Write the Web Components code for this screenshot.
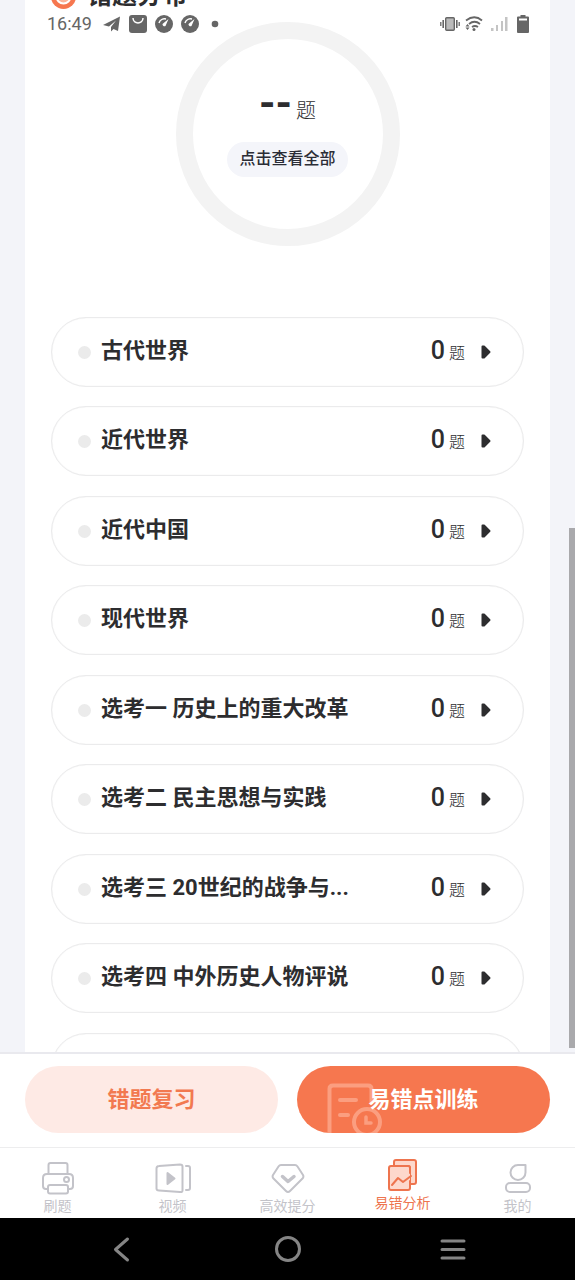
<!DOCTYPE html>
<html lang="zh-CN">
<head>
<meta charset="utf-8">
<meta name="viewport" content="width=device-width, initial-scale=1">
<title>错题分布</title>
<style>
  html, body { margin: 0; height: 100%; }
  body {
    font-family: Roboto, "Noto Sans CJK SC", sans-serif;
    color: #2d2d2f;
    --accent: #f6774f;
    --line: #ebebec;
    --muted: #c3c3c9;
  }
</style>
</head>
<body>
<mistake-app></mistake-app>

<script>
const define = (name, html, setup) => {
  const template = document.createElement('template');
  template.innerHTML = html;
  customElements.define(name, class extends HTMLElement {
    constructor() {
      super();
      this.attachShadow({ mode: 'open' }).append(template.content.cloneNode(true));
    }
    connectedCallback() { if (setup) setup(this, this.shadowRoot); }
  });
};

/* Phone status bar, laid over the scrolled page */
define('status-bar', `
<style>
  :host { display: flex; align-items: center; justify-content: space-between; height: 24px; padding: 0 46px 0 47px; color: #666; }
  div { display: flex; align-items: center; gap: 8px; }
  time { font-size: 18px; line-height: 24px; margin-right: 3px; }
  svg { display: block; }
  .net { gap: 5px; }
  .net svg + svg + svg { margin-left: 3px; }
</style>
<div>
  <time>16:49</time>
  <svg width="18" height="18" viewBox="0 0 18 18" fill="#666"><path d="M0 10 17 1.500 15 16 10.500 14 8 16.500V12L13 5.500 6 11.500Z"/></svg>
  <svg width="18" height="18" viewBox="0 0 18 18"><rect width="18" height="18" rx="3" fill="#666"/><path d="M4 3c0 6.500 10 6.500 10 0" fill="none" stroke="#fff" stroke-width="1.500"/></svg>
  <svg width="18" height="18" viewBox="0 0 18 18"><circle cx="9" cy="9" r="9" fill="#666"/><path d="M4 8a6 6 0 0 1 7-4" fill="none" stroke="#fff" stroke-width="1.500"/><path d="M13.500 4 10.500 11A2 2 0 0 1 7.500 9Z" fill="#fff"/></svg>
  <svg width="18" height="18" viewBox="0 0 18 18"><circle cx="9" cy="9" r="9" fill="#666"/><path d="M4 8a6 6 0 0 1 7-4" fill="none" stroke="#fff" stroke-width="1.500"/><path d="M13.500 4 10.500 11A2 2 0 0 1 7.500 9Z" fill="#fff"/></svg>
  <svg width="18" height="18" viewBox="0 0 18 18"><circle cx="8" cy="9" r="3.300" fill="#666"/></svg>
</div>
<div class="net">
  <svg width="20" height="16" viewBox="0 0 20 16" fill="none" stroke="#666"><rect x="5.700" y="1.700" width="8.600" height="12.600" rx="1" fill="#bbb" stroke-width="1.400"/><path d="M3.200 4v8M16.800 4v8" stroke-width="1.600"/><path d="M.8 6v4M19.200 6v4" stroke-width="1.300"/></svg>
  <svg width="18" height="18" viewBox="0 0 18 18" fill="none" stroke="#666" stroke-width="1.800"><path d="M1 5.500q8.500-6.500 16 0M4 9q5.500-4.500 11 0M7 12q3-2 6 0"/><circle cx="9" cy="14.500" r="1.500" fill="#666" stroke="none"/><path d="M.5 11.500 2.500 9l2 2.500ZM.5 12.500l2 2.500 2-2.500Z" fill="#666" stroke="none"/></svg>
  <svg width="18" height="18" viewBox="0 0 18 18" fill="#c4c4c4"><path d="M0 13h2.500v3H0zM5 10h2v6H5zM10 6h2v10h-2zM14 2h2.500v14H14z"/></svg>
  <svg width="12" height="18" viewBox="0 0 12 18"><path d="M3.500 0h5v1.500H11q1 0 1 1V17q0 1-1 1H1q-1 0-1-1V2.500q0-1 1-1h2.500z" fill="#666"/><path d="M2 3.500h8v2H2z" fill="#fff"/></svg>
</div>`);

/* Ring with the total and a shortcut to the full list */
define('total-ring', `
<style>
  :host { display: flex; flex-direction: column; align-items: center; box-sizing: border-box; width: 224px; height: 224px; padding-top: 39px; border: 17px solid #f3f3f3; border-radius: 50%; }
  p { display: flex; align-items: baseline; gap: 4px; margin: 0; line-height: 52px; font-size: 20px; font-weight: 300; }
  b { font-size: 42px; font-weight: 700; }
  button { margin-top: 5px; padding: 0 12px 2px; height: 35px; border: 0; border-radius: 18px; background: #f4f5fa; font: 500 16px/32px Roboto, "Noto Sans CJK SC", sans-serif; color: #2b2d36; }
</style>
<p><b><slot name="count"></slot></b><slot></slot></p>
<button type="button"><slot name="action"></slot></button>`);

define('topic-row', `
<style>
  :host { display: block; }
  a { display: flex; align-items: center; box-sizing: border-box; height: 70px; padding: 0 32px 0 26px; border: 1px solid var(--line); border-radius: 35px; box-shadow: inset 0 0 1px #e2e2e2; color: inherit; text-decoration: none; }
  i { width: 13px; height: 13px; margin-right: 10px; border-radius: 50%; background: #ebebeb; }
  h3 { flex: 1; margin: 0; padding-bottom: 2px; font-size: 22px; line-height: 32px; font-weight: 700; }
  span { display: flex; align-items: baseline; gap: 4px; font-size: 16px; line-height: 32px; font-weight: 300; }
  b { font-size: 25px; font-weight: 500; }
  svg { margin-left: 16px; }
</style>
<a href="#"><i></i><h3><slot></slot></h3><span><b></b></span>
<svg width="10" height="14" viewBox="0 0 10 14"><path d="M1.500 1.500H3L8.500 7 3 12.500H1.500Z" fill="#2d2d2f" stroke="#2d2d2f" stroke-width="2" stroke-linejoin="round"/></svg></a>`,
(el, root) => {
  if (!el.hasAttribute('count')) return;
  root.querySelector('b').textContent = el.getAttribute('count');
  root.querySelector('span').append('题');
});

define('topic-list', `
<style>
  :host { display: flex; flex-direction: column; gap: 19px; }
  ::slotted(:nth-child(even)) { margin-bottom: 1px; }
</style>
<slot></slot>`);

define('distribution-card', `
<style>
  :host { display: block; margin: -22px 25px 0; padding: 0 26px; background: #fff; }
  h2 { display: flex; align-items: center; gap: 11px; margin: 0; font-size: 25px; line-height: 36px; font-weight: 700; }
  total-ring { margin: 8px auto 71px; }
</style>
<h2><svg width="25" height="25" viewBox="0 0 25 25"><circle cx="12.500" cy="12.500" r="12.500" fill="#f6774f"/><circle cx="12.500" cy="12.500" r="7" fill="#fbb59b" stroke="#fff" stroke-width="2"/></svg>错题分布</h2>
<total-ring><span slot="count">--</span>题<span slot="action">点击查看全部</span></total-ring>
<topic-list>
  <topic-row count="0">古代世界</topic-row>
  <topic-row count="0">近代世界</topic-row>
  <topic-row count="0">近代中国</topic-row>
  <topic-row count="0">现代世界</topic-row>
  <topic-row count="0">选考一 历史上的重大改革</topic-row>
  <topic-row count="0">选考二 民主思想与实践</topic-row>
  <topic-row count="0">选考三 20世纪的战争与...</topic-row>
  <topic-row count="0">选考四 中外历史人物评说</topic-row>
  <topic-row></topic-row>
</topic-list>`);

define('action-bar', `
<style>
  :host { display: grid; grid-template-columns: 1fr 1fr; gap: 19px; padding: 12px 25px 14px; border-top: 2px solid #e9e9ee; background: #fff; }
  button { position: relative; overflow: hidden; height: 67px; padding: 0; border: 0; border-radius: 34px; background: #feeae5; color: #f27950; font: 700 22px/32px Roboto, "Noto Sans CJK SC", sans-serif; }
  .primary { background: var(--accent); color: #fff; }
  svg { position: absolute; left: 30px; bottom: 0; }
  span { position: relative; }
</style>
<button type="button">错题复习</button>
<button type="button" class="primary"><svg width="56" height="50" viewBox="0 0 56 50" fill="none" stroke="#fb9e80" stroke-width="4" stroke-linecap="round"><path d="M2.500 54V6q0-3.500 3.500-3.500h35q3.500 0 3.500 3.500v13M13 17h16M13 32h8"/><circle cx="40" cy="39" r="13"/><path d="M39 34v6h5" stroke-width="3.500"/></svg><span>易错点训练</span></button>`);

define('tab-item', `
<style>
  :host { display: block; color: var(--muted); font-size: 14px; }
  :host([active]) { color: #ee744e; margin-top: -3px; }
  a { display: flex; flex-direction: column; align-items: center; gap: 1px; color: inherit; text-decoration: none; line-height: 20px; }
  ::slotted(svg) { display: block; }
</style>
<a href="#"><slot name="icon"></slot><slot></slot></a>`);

define('tab-bar', `
<style>
  :host { display: grid; grid-template-columns: repeat(5, 1fr); box-sizing: border-box; height: 71px; padding-top: 13px; border-top: 1px solid #ededee; background: #fff; }
  svg { fill: none; stroke: currentColor; stroke-width: 2; stroke-linejoin: round; stroke-linecap: round; }
</style>
<tab-item><svg slot="icon" width="34" height="34" viewBox="0 0 34 34"><path d="M7.500 13V4q0-2 2-2h15q2 0 2 2v9M7 28H5q-3 0-3-3v-8q0-4 4-4h22q4 0 4 4v8q0 3-3 3h-2"/><rect x="7" y="24" width="20" height="8.500" rx="2"/><circle cx="25.500" cy="18.500" r="2.500"/></svg>刷题</tab-item>
<tab-item><svg slot="icon" width="36" height="34" viewBox="0 0 36 34"><path d="M4 5 25 3.500q2.500 0 2.500 2v24q0 2-2.500 1.500L4 29.500q-2.500 0-2.500-2V7.500Q1.500 5 4 5ZM31 5h2q2 0 2 2v20q0 2-2 2h-2"/><path d="M12.500 12v11l7-5.500Z" fill="currentColor"/></svg>视频</tab-item>
<tab-item><svg slot="icon" width="34" height="34" viewBox="0 0 34 34"><path d="M10 4h14q1.500 0 2.500 1.500L32 14q1 2-.5 3.500L19 30q-2 2-4 0L2.500 17.500Q1 16 2 14L7.500 5.500Q8.500 4 10 4Z"/><path d="m11.500 15.500 5.500 5 6-5" stroke-width="3.500"/></svg>高效提分</tab-item>
<tab-item active><svg slot="icon" width="34" height="34" viewBox="0 0 34 34"><path d="M8 8V4q0-2 2-2h18q2 0 2 2v20q0 2-2 2h-4V10q0-2-2-2Z" fill="#fdd8cc"/><path d="M24 15v-5q0-2-2-2H5q-2 0-2 2v20q0 2 2 2h17q2 0 2-2v-7" fill="#fdd8cc"/><path d="m6 27 6-7 5 4 8-6"/></svg>易错分析</tab-item>
<tab-item><svg slot="icon" width="34" height="34" viewBox="0 0 34 34"><path d="M24.500 4v7.500a7.500 7.500 0 1 1-7.500-7.500Z"/><rect x="5" y="22" width="24" height="9" rx="4"/></svg>我的</tab-item>`);

define('system-nav', `
<style>
  :host { display: flex; align-items: center; justify-content: space-between; height: 62px; padding: 0 104px; background: #000; }
  button { padding: 0; border: 0; background: none; }
  svg { display: block; fill: none; stroke: #858585; stroke-width: 3; stroke-linecap: round; stroke-linejoin: round; }
</style>
<button type="button" aria-label="返回"><svg width="36" height="28" viewBox="0 0 36 28"><path d="M23.500 4 11.500 14.500 23.500 25"/></svg></button>
<button type="button" aria-label="主页"><svg width="28" height="28" viewBox="0 0 28 28"><circle cx="14" cy="14" r="11.500"/></svg></button>
<button type="button" aria-label="最近任务"><svg width="36" height="28" viewBox="0 0 36 28"><path d="M7 6h22M7 14.500h22M7 23h22"/></svg></button>`);

define('mistake-app', `
<style>
  :host { display: flex; flex-direction: column; height: 100vh; position: relative; background: #f3f4f9; }
  main { position: relative; flex: 1; min-height: 0; overflow: hidden; }
  status-bar { position: absolute; top: 12px; left: 0; right: 0; }
  .thumb { position: absolute; right: 0; bottom: 4px; width: 6px; height: 520px; background: #a9a9ac; }
</style>
<main><distribution-card></distribution-card><div class="thumb"></div></main>
<action-bar></action-bar>
<tab-bar></tab-bar>
<system-nav></system-nav>
<status-bar></status-bar>`);
</script>
</body>
</html>
